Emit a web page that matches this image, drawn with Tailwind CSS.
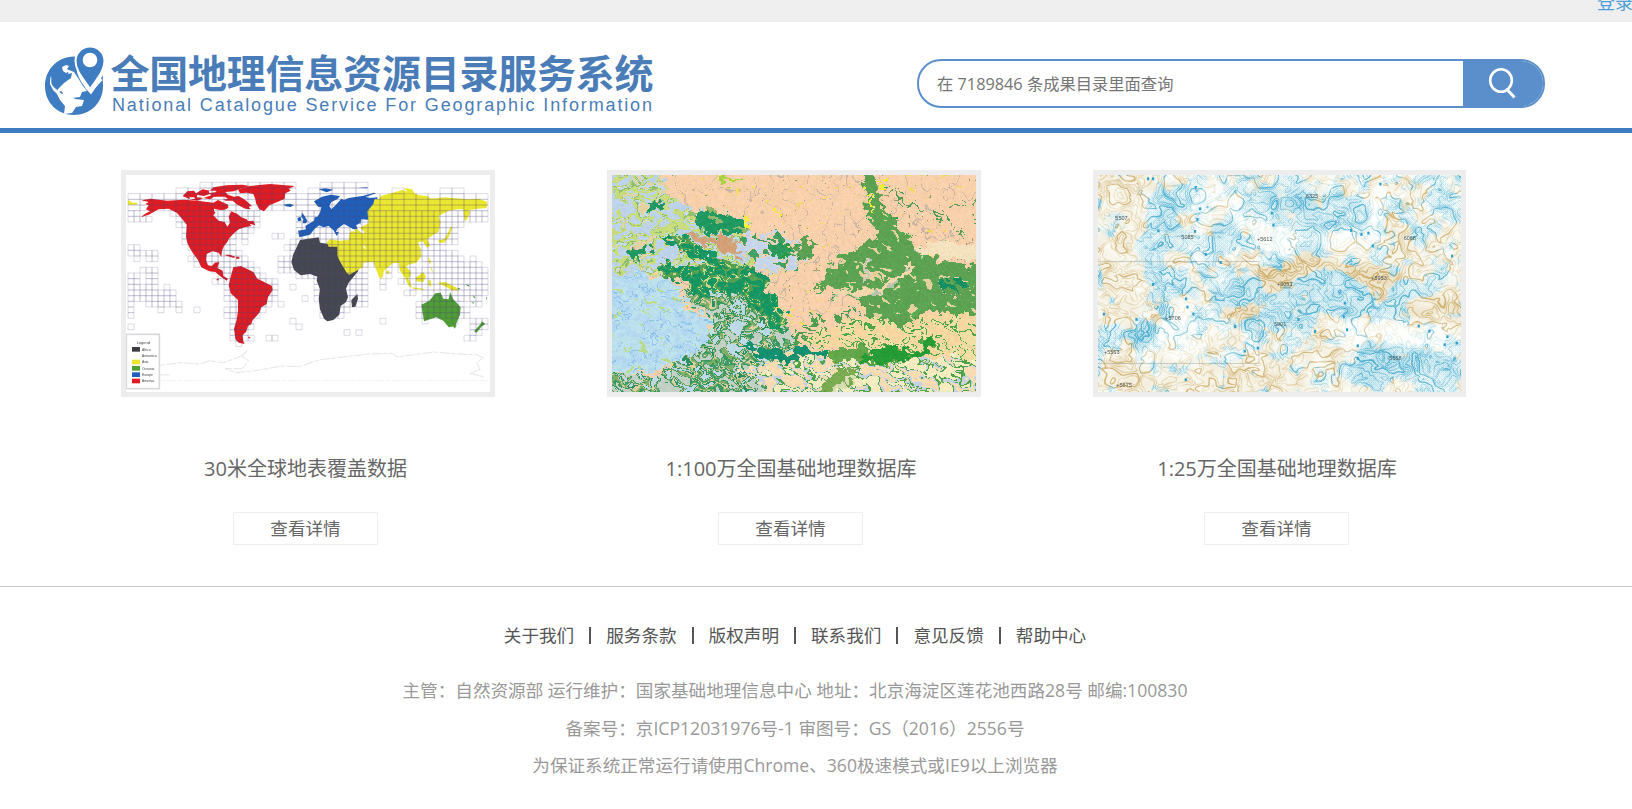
<!DOCTYPE html>
<html lang="zh-CN">
<head>
<meta charset="utf-8">
<title>全国地理信息资源目录服务系统</title>
<script src="https://cdn.jsdelivr.net/npm/@tailwindcss/browser@4"></script>
</head>
<body class="h-[809px] w-full overflow-hidden bg-white font-['Open_Sans','Noto_Sans_CJK_SC',sans-serif] font-normal text-[#666]">
<div class="flex h-[22px] items-end justify-end overflow-hidden bg-[#efefef]">
  <a class="-mr-[1px] mb-[8px] whitespace-nowrap text-[18px] leading-[24px] text-[#4c9ed9]">登录</a>
</div>
<header class="flex h-[111px] items-start border-b-[5px] border-[#3f7dc2]">
  <svg class="ml-[40px] mt-[18px] shrink-0" width="620" height="80" viewBox="40 40 620 80">
    <path fill="#3f7dc2" d="M74 56.500C57 57 45 70 45 86c0 17 13 29 29 29s29-12 29-29l-.3-11C100 81 96 87 91 94.500 84 86 76 77 76.500 66c0-3 .5-6 2-8.500z"/>
    <path fill="#fff" d="M51 76c1 4-1 7 2 10 2 3 4 3 5 5l4 3 3-2 5 3 5 4 9 1-2 6-6 1-4 6-8 1 1-8-5-6-3-6-4-4-3-6c0-3 0-6 1-8z"/>
    <path fill="#fff" d="M64 83l7-5 1-5-4 1 1-4 5 2 4 6 5 8 4 5-5 1-2 5-8 1-6-2-5-5-4 2 1-4z"/>
    <path fill="#fff" d="M62 67l4-2 3 1-2 3 3 2-4 2-3-2z"/>
    <path fill="#3f7dc2" stroke="#fff" stroke-width="2" d="M90 46.500c-8 0-14.500 6.500-14.500 14.500 0 10 8 18 14.500 28 7-10 14.500-18 14.500-28 0-8-6.500-14.500-14.500-14.500z"/>
    <circle cx="90" cy="60" r="7.300" fill="#fff"/>
    <path fill="none" stroke="#fff" stroke-width="3" d="M86 87l4.500 4 11-12"/>
    <text x="110.500" y="88.300" textLength="543" lengthAdjust="spacing" font-family="'Noto Sans CJK SC'" font-weight="700" font-size="39" fill="#4a7db8">全国地理信息资源目录服务系统</text>
    <text x="112" y="111" textLength="540" lengthAdjust="spacing" font-family="'Liberation Sans'" font-weight="400" font-size="18" fill="#4a7db8">National Catalogue Service For Geographic Information</text>
  </svg>
  <div class="ml-[257px] mt-[37px] flex h-[49px] w-[628px] shrink-0 overflow-hidden rounded-[24px] border-2 border-[#5b8fcc]">
    <div class="flex flex-1 items-center whitespace-nowrap pl-[18px] pt-[2px] text-[16.3px] text-[#757575]">在 7189846 条成果目录里面查询</div>
    <div class="w-[80px] bg-[#5b8fcc]">
      <svg class="ml-[25px] mt-[6px]" width="30" height="33" viewBox="1488 67 30 33" fill="none" stroke="#fff">
        <ellipse cx="1501" cy="80.500" rx="10.800" ry="11.300" stroke-width="2.600"/>
        <path d="M1507.500 90l7 7.500" stroke-width="3"/>
      </svg>
    </div>
  </div>
</header>

<main class="flex h-[454px] gap-[117px] border-b border-[#c8c8c8] pl-[121px] pt-[37px]">
  <section class="flex w-[369px] shrink-0 flex-col items-center">
    <div class="h-[227px] w-[374px] shrink-0 self-start overflow-hidden border-[5px] border-[#ededed]">
      <svg id="world" class="blur-[0.4px]" width="364" height="217" viewBox="48 45 1092 651" preserveAspectRatio="none">
        <g fill="#e01b22">
          <path d="M94 121l28-5 50 6 50-3 40 3 48 6 14-8 30 14 2 14-20 2-18 6-8 10 16 16 18 4 8 14 8-12-4-18 8-16 18 8 12 10 16 6 14 20-20 4-18 6-14 12-14 14-6 12-10 12-6 14-2 18-8-12-18-4-18 8-2 18 6 16 12 2 8-10 14-2-6 18 16 8 2 16 14 8-4 6-20-14-14-12-18-2-24-12-10-22-16-22-10-16-6-14-4-18 2-36-14-18-16-18-24-12-30 2-30 16-24 8 16-12 12-6-12-6 8-12-10-4 10-6z"/>
          <path d="M218 108l14-14 20-2 6 8 20-12 22 4 10-10 40-6 46-2 24 4-30 8-18 8-26 2 8 8 18 6 14-2 20 12 20 18-10 2 6 8-16-2-24-12-14-12-22 0-14-10-20-2-12 8-20-4-18 8-22-4z"/>
          <path d="M384 88l36-10 60-6 74 6-18 8 6 6-16 8-2 16-22 10-24 10-16 18-14-6-10-18-2-12-6-16-20-4-20 2z"/>
          <path d="M370 322l22-4 18 8 20 10 12 20 16 8 28 14 2 12-14 22-4 20-16 10-6 16-12 14-8 8-4 12-10 6-6 18-10 10 2 18 4 8-18-4-10-12-4-30 8-26 4-28 0-32-22-20-6-24 6-26z"/>
          <path d="M342 284l18 0 16 6-4 4-20-6zM378 290h10v6h-10zM320 356h6v5h-6zM414 530l8 1-5 5zM378 538l16 5-12 1zM404 184l26-2 6 14-14-4-16 0z"/>
        </g>
        <path fill="#fff" d="M262 104l20 4 18-6 4 4-24 8-20-2zM318 110l26 0 10 6-20 4zM296 92l20 0 4 4-22 3zM238 112l14 0 4 4-16 2z"/>
        <path fill="#1f5fba" d="M568 232l-4-20 24-4-2-10 16-10 10-6 2-10 8-2 8-12 4-16-10-2-12-16 24-14 26-6 28 4-8 10-18 8-6 12 6 10 14-14 16-18 8 4 14-6 40-6 24 6 22-2 0 14-14 10 2 22-6 22-30-2-6 30-24 0-20-4-14 6-10 18-10-18-14-12-16 4-12-6-14 10-14 18zM576 158l8 10 8 14-4 8-10 0 2-12-6-8zM562 174l10-4 2 12-10 2zM520 134l18-3 14 4-10 6-14-2zM626 88l20-3 24 4-20 8zM750 118l8-10 34-10 6 2-34 12-8 10zM742 84l30-2v3z"/>
        <path fill="#45474e" d="M570 240l26-4 30-4 4 16 28 4 6-6 34 6 8 28 22 36 20 4-4 14-28 34-8 18 6 26-6 14-16 12-4 26-18 16-18 4-10-8-12-28-4-32 4-28-10-26 2-12-22-8-28 4-20-16-8-24 6-24 10-20zM742 402l2 14-8 24-10 2-2-22z"/>
        <path fill="#ebe72e" d="M776 190l-4-36 18-22 4-16 12 2 6-10 36-10 30-8 14 6-10-12 24 4 8 12 14 6 22 2 14 8 40-4 68 6 36-2 24 10-2 18-26 2-26 4-2 14-10 18-4-12-2-22-18 0-26 4-30 16 6 18-6 30-18 10-16 12 8 18-8 8-14-20-14 4 8 18 2 22-14 20-24 6-8 6 14 14 0 12-8 10-12-6-12-18-4-24-18 2-26 22-4 18-8 8-12-30-8-22-30 2 0 12-16 10-26 14-8-6-18-30-10-20 0-28-26 0-6-14 10-8 30 4 26-2 4-24zM54 120l14 8 14 0-2 6-26 0zM830 330l8 4-2 8-8-4zM880 342l18 18 8 24-10-6zM908 382l32 4 0 4-30-4zM916 354l24-18 8 14-8 16-20-2zM954 362l8-2 2 20-8-4zM954 290l10 16-6 6zM962 318l8 20-6-6zM984 242l20-6 12-22 6-16 4 8-10 26-14 16-14 0zM1062 170l8-8 12-8-10 22-8 8zM982 368l22-2 34 16 8 10-22-2-16-10z"/>
        <path fill="#4f9d35" d="M934 434l24-12 18-22 16-2 8 18 16 2 4-22 10 22 22 24-2 22-14 34-20 4-16-20-22-10-36 12zM1028 496h12l-6 10zM1116 484l10 8-12 8-14 18-8-4 20-22zM1066 372l12 4-2 4zM1088 404l8 8-4 3zM1084 426l10 2-4 3zM1128 412l3 0-2 10zM1042 384l8 0-3 5z"/>
        <path fill="#fff" d="M738 196l12-6 4 18 10 8-4 6-14-10zM702 192l22 12 16 12-30-6-6 6-26 0 4-10zM756 252l12 12-4 4zM312 146l28 6 20-12-10 22 0 10-26-8-12-10z"/>
        <path id="grid" fill="none" stroke="#504d80" stroke-opacity=".27" stroke-width="2.200"/>
        <g fill="none" stroke="#d6d6d6" stroke-width="2" stroke-dasharray="14 5 30 3"><path d="M150 616l60-8 60 4 30-10 40 6 50-18 22-18-16 18 20 12-20 24-50 0 30 12 60-6 80-14 50 2 60-20 80-10 70-8 70-2 14 10 40-4 70-10 70 6 60 2 20 10-20 14 10 20-30 12 40 10M130 644l50 1"/><path stroke="#ededed" d="M150 662h984"/></g>
        <rect x="49" y="523" width="99" height="163" fill="#fff" stroke="#d9d9d9" stroke-width="5"/>
        <g font-family="'Liberation Sans'" font-size="10" fill="#444"><text x="80" y="551" font-size="12">Legend</text><text x="96" y="572">Africa</text><text x="96" y="591">Antarctica</text><text x="96" y="610">Asia</text><text x="96" y="629">Oceania</text><text x="96" y="648">Europe</text><text x="96" y="667">America</text></g>
        <path fill="#3b3d42" d="M66 561h24v14H66z"/><path fill="#ebe72e" d="M66 599h24v14H66z"/><path fill="#4f9d35" d="M66 618h24v14H66z"/><path fill="#1f5fba" d="M66 637h24v14H66z"/><path fill="#e01b22" d="M66 656h24v14H66z"/>
      </svg>
    </div>
    <h2 class="mt-[57px] h-[30px] whitespace-nowrap text-[20px] leading-[30px]">30米全球地表覆盖数据</h2>
    <a class="mt-[28px] flex h-[33px] w-[145px] items-center justify-center border border-[#eee] text-[17.6px] leading-none">查看详情</a>
  </section>
  <section class="flex w-[369px] shrink-0 flex-col items-center">
    <div class="h-[227px] w-[374px] shrink-0 self-start overflow-hidden border-[5px] border-[#ededed]"><canvas id="terrain" class="block blur-[0.5px]" width="364" height="217"></canvas></div>
    <h2 class="mt-[57px] mr-[1px] h-[30px] whitespace-nowrap text-[20px] leading-[30px]">1:100万全国基础地理数据库</h2>
    <a class="mt-[28px] mr-[2px] flex h-[33px] w-[145px] items-center justify-center border border-[#eee] text-[17.6px] leading-none">查看详情</a>
  </section>
  <section class="flex w-[369px] shrink-0 flex-col items-center">
    <div class="h-[227px] w-[373px] shrink-0 self-start overflow-hidden border-[5px] border-[#ededed]"><canvas id="contour" class="block blur-[0.4px]" width="363" height="217"></canvas></div>
    <h2 class="mt-[57px] mr-[1px] h-[30px] whitespace-nowrap text-[20px] leading-[30px]">1:25万全国基础地理数据库</h2>
    <a class="mt-[28px] mr-[2px] flex h-[33px] w-[145px] items-center justify-center border border-[#eee] text-[17.6px] leading-none">查看详情</a>
  </section>
</main>

<footer class="flex w-[1590px] flex-col items-center pt-[35px] text-[17.6px] text-[#999]">
  <nav class="flex h-[26px] items-center gap-[15px] whitespace-nowrap leading-[26px] text-[#555]">
    <a>关于我们</a><i class="h-[17px] w-[2px] bg-[#555]"></i><a>服务条款</a><i class="h-[17px] w-[2px] bg-[#555]"></i><a>版权声明</a><i class="h-[17px] w-[2px] bg-[#555]"></i><a>联系我们</a><i class="h-[17px] w-[2px] bg-[#555]"></i><a>意见反馈</a><i class="h-[17px] w-[2px] bg-[#555]"></i><a>帮助中心</a>
  </nav>
  <div class="mt-[24px] flex flex-col items-center whitespace-nowrap leading-[37.5px]">
    <p>主管：自然资源部 运行维护：国家基础地理信息中心 地址：北京海淀区莲花池西路28号 邮编:100830</p>
    <p>备案号：京ICP12031976号-1 审图号：GS（2016）2556号</p>
    <p>为保证系统正常运行请使用Chrome、360极速模式或IE9以上浏览器</p>
  </div>
</footer>

<script>
// Survey sheet grid: column ranges per row, 60 columns of 18 units
const rows = ['12-27 32-39','8-27 30-39 44-45 52-55','0-59','0-59','0-59','0-1 7-21 28-59','0-3 8-21 28-59','8-21 28-55','9-20 28-54','9-19 24-25 28-54','9-17 19-19 27-54','0-1 10-17 26-52','0-4 11-18 27-54','1-1 3-4 10-19 25-55 57-57','11-11 13-20 25-47 49-58','2-4 14-21 25-39 43-43 45-59','0-1 3-4 15-22 28-39 43-43 46-59','0-1 3-4 14-24 31-39 42-42 45-59','0-4 6-6 16-24 27-27 31-39 42-42 47-59','0-7 16-24 31-39 46-47 49-59','0-7 16-24 29-29 31-39 49-58','0-0 3-8 17-23 25-25 32-39 48-55 57-58','0-0 5-5 8-8 11-11 16-22 32-36 48-56','0-0 16-21 32-35 48-56','17-20 27-27 42-42 49-49 54-54 57-59','0-0 17-20 28-28 57-59','17-19 36-36 38-38 57-58','17-20 23-24 56-57','18-18'];
let d = '';
rows.forEach((r, i) => r.split(' ').forEach(s => {
  const [a, b] = s.split('-').map(Number), step = i < 5 ? 2 : 1;
  for (let c = a; c <= b; c += step) d += `M${54 + c * 18} ${67 + i * 17}h${18 * step}v17h${-18 * step}z`;
}));
document.getElementById('grid').setAttribute('d', d);

// Smooth value noise
function hash(x, y, s) { let n = Math.imul(x, 374761393) ^ Math.imul(y, 668265263) ^ Math.imul(s, 1274126177); n = Math.imul(n ^ (n >>> 13), 1274126177); return ((n ^ (n >>> 16)) >>> 0) / 4294967295; }
function noise(x, y, s) {
  const i = Math.floor(x), j = Math.floor(y); let u = x - i, v = y - j; u = u * u * (3 - 2 * u); v = v * v * (3 - 2 * v);
  return (hash(i, j, s) * (1 - u) + hash(i + 1, j, s) * u) * (1 - v) + (hash(i, j + 1, s) * (1 - u) + hash(i + 1, j + 1, s) * u) * v;
}
const fbm = (x, y, s) => noise(x, y, s) * .55 + noise(x * 2.1, y * 2.1, s + 1) * .3 + noise(x * 4.3, y * 4.3, s + 2) * .15;
const rgb = h => [parseInt(h.slice(0, 2), 16), parseInt(h.slice(2, 4), 16), parseInt(h.slice(4), 16)];
function fillPoly(g, c, p) { g.fillStyle = c; g.beginPath(); p.split(' ').forEach(q => { const [x, y] = q.split(',').map(Number); g.lineTo((x - 48) / 3, (y - 45) / 3); }); g.fill(); }

// Vegetation map: zones index into palettes of [threshold, colour] over noise
(() => {
  const W = 364, H = 217, cv = document.getElementById('terrain'), g = cv.getContext('2d');
  const z = document.createElement('canvas'); z.width = W; z.height = H; const zg = z.getContext('2d', { willReadFrequently: true });
  const zones = [
    ['0,0 0,0', [['f8d0ac', 1]]],
    ['48,45 195,45 230,110 310,160 450,200 520,240 600,300 560,340 400,310 200,330 48,350', [['bdd3ea', .42], ['c9dc7c', .58], ['8fbf6c', .63], ['c4dbe9', .7], ['e6d2a0', 1]]],
    ['48,340 200,345 265,420 345,500 350,560 240,610 48,650', [['b4d8f0', .48], ['bce0ec', .76], ['bcdc8c', 1]]],
    ['270,225 400,218 460,260 440,300 370,265 280,245', [['d3a077', .6], ['c4b184', .7], ['bdd0ea', 1]]],
    ['430,205 600,230 640,280 600,330 500,330 430,270', [['c5d5ec', .52], ['f8d0ac', .6], ['43a065', 1]]],
    ['175,230 270,230 350,280 420,310 510,350 520,400 590,490 560,505 440,430 300,400 245,370 190,345 190,300 280,305 370,320 280,285', [['159663', .48], ['55a052', .62], ['c9d989', .68], ['159663', 1]]],
    ['300,165 350,148 440,175 470,200 430,215 320,215', [['1f9862', .6], ['92b66a', 1]]],
    ['95,270 135,262 165,250 160,285 125,290 120,310 100,290', [['1f9862', .7], ['c9dc7c', 1]]],
    ['175,125 210,125 210,160 175,155', [['1f9862', 1]]],
    ['260,395 420,400 500,480 600,520 620,600 520,696 48,696 48,650 200,640 330,560 340,480', [['c2d0c6', .38], ['3a9a66', .46], ['7fae68', .54], ['d9cfa0', .6], ['2a9060', .67], ['bdd9e6', 1]]],
    ['440,560 640,575 720,580 700,600 620,610 480,600', [['13906f', .65], ['f4d6a8', 1]]],
    ['590,520 650,470 770,450 790,500 720,530 600,560', [['f8d0ac', .44], ['4f9f53', .6], ['f8d0ac', 1]]],
    ['780,470 960,480 1160,440 1160,600 980,600 780,560 600,560', [['f8d6a0', .5], ['f2dfa6', .58], ['4fa349', .66], ['f2dfa6', 1]]],
    ['430,620 640,600 1160,590 1160,710 540,710', [['f6dcb0', .4], ['c6d2e2', .5], ['4fa349', .58], ['f4ecc0', 1]]],
    ['640,710 700,640 780,630 770,670 700,710', [['7aab50', .62], ['d4dcb0', 1]]],
    ['700,575 800,565 860,590 800,610 700,600', [['62a84b', 1]]],
    ['780,600 860,560 960,580 1010,520 1020,550 980,590 860,610', [['259c35', 1]]],
    ['660,385 745,290 800,265 850,225 815,170 805,40 830,40 850,120 900,180 945,240 960,280 1060,310 1170,325 1170,475 1000,450 960,495 880,485 810,470 780,420 700,410 800,370 740,380', [['5ca252', .66], ['57ab51', .73], ['e6cf9f', 1]]],
    ['700,405 830,385 900,345 940,305 955,310 910,365 850,400 740,420', [['f2d6ac', .66], ['b6c6ae', 1]]],
    ['800,300 812,300 810,370 800,370', [['cfc8b8', 1]]],
    ['1020,350 1100,350 1120,400 1050,410', [['5ca252', .5], ['168f62', 1]]],
    ['600,245 650,250 640,290 605,280', [['5ca252', 1]]],
    ['530,250 580,250 580,275 530,275', [['2d9a5e', 1]]],
    ['860,60 930,110 970,150 1060,170 1050,190 960,170 880,110', [['f8d0ac', .45], ['4f9a55', .57], ['f8d0ac', 1]]],
    ['1030,240 1170,250 1170,300 960,285', [['f3e2bd', 1]]],
    ['370,45 425,62 415,70 365,48', [['a5d343', 1]]],
    ['848,55 862,60 860,90 848,90', [['f5ec35', 1]]],
    ['808,95 822,100 838,145 825,145', [['f0ee38', 1]]],
    ['445,180 475,182 470,200 450,200', [['f5ec35', 1]]],
    ['555,160 570,160 565,175 556,172', [['f5ec35', 1]]],
    ['1060,130 1170,110 1170,220 1080,230', [['f8d0ac', .58], ['5c9f58', .64], ['f8d0ac', 1]]]
  ];
  zones.forEach((q, i) => i && fillPoly(zg, `rgb(${i * 8},0,0)`, q[0]));
  const zd = zg.getImageData(0, 0, W, H).data, im = g.createImageData(W, H);
  const pal = zones.map(q => q[1].map(e => [rgb(e[0]), e[1]]));
  for (let y = 0; y < H; y++) for (let x = 0; x < W; x++) {
    const k = x < 220 ? 18 : 13;
    const X = Math.max(0, Math.min(W - 1, Math.round(x + (fbm(x / 9, y / 9, 3) - .5) * k + (noise(x / 4, y / 4, 7) - .5) * 7)));
    const Y = Math.max(0, Math.min(H - 1, Math.round(y + (fbm(x / 9, y / 9, 13) - .5) * k + (noise(x / 4, y / 4, 17) - .5) * 7)));
    const zi = Math.min(zones.length - 1, Math.round(zd[(Y * W + X) * 4] / 8));
    const wx = x + (noise(x / 7, y / 7, 31) - .5) * 9, wy = y + (noise(x / 7, y / 7, 33) - .5) * 9;
    const up = zi === 1 ? -.25 : .43;
    const rx = wx * .9 + wy * up, ry = wy * .9 - wx * up;
    const n = noise(rx / 9, ry / 4, 29 + (zi % 4)) * .68 + noise(rx / 4, ry / 2.5, 41) * .32;
    let c = pal[zi].find(e => n <= e[1])[0].slice();
    if (zi === 0) {
      if (fbm(x / 5, y / 4, 90) > .79) c = rgb('f3dc55');
      else if (Math.abs(fbm(x / 30, y / 30, 70) - .5) < .006 || Math.abs(fbm(x / 26, y / 40, 75) - .47) < .006) c = rgb('cdb8a7');
      else if (noise(x / 3, y / 2.5, 55) > .955) c = rgb('8fa06c');
    }
    if (zi === 2 && Math.abs(fbm(x / 13, y / 10, 44) - .5) < .018) c = rgb('8fc4ea');
    const sh = (noise(x / 1.5, y / 1.5, 99) - .5) * 12, o = (y * W + x) * 4;
    im.data[o] = c[0] + sh; im.data[o + 1] = c[1] + sh; im.data[o + 2] = c[2] + sh; im.data[o + 3] = 255;
  }
  g.putImageData(im, 0, 0);
})();

// Contour map: isolines of a height field, tinted glacier blue or ground tan
(() => {
  const W = 363, H = 217, g = document.getElementById('contour').getContext('2d');
  const z = document.createElement('canvas'); z.width = W; z.height = H; const zg = z.getContext('2d', { willReadFrequently: true });
  zg.fillStyle = 'rgb(128,75,0)'; zg.fillRect(0, 0, W, H); zg.filter = 'blur(4px)';
  // red channel: blue/tan balance, green channel: intensity
  fillPoly(zg, 'rgb(30,100,0)', '48,45 210,45 200,200 150,310 220,430 150,500 48,500');
  fillPoly(zg, 'rgb(220,110,0)', '210,90 320,100 260,300 360,400 200,420 160,280');
  fillPoly(zg, 'rgb(220,120,0)', '370,190 560,100 860,120 900,200 680,290 540,250 400,290');
  fillPoly(zg, 'rgb(230,140,0)', '350,330 650,320 900,310 1000,360 960,450 740,470 600,500 540,540 380,430');
  fillPoly(zg, 'rgb(250,250,0)', '130,520 200,500 240,420 270,460 220,540 300,570 260,600 140,560');
  fillPoly(zg, 'rgb(240,170,0)', '850,520 940,560 1140,600 1140,660 980,630 870,690 800,680');
  fillPoly(zg, 'rgb(250,210,0)', '520,105 680,100 730,130 650,160 560,130');
  fillPoly(zg, 'rgb(20,110,0)', '48,610 160,600 300,640 500,590 660,630 700,696 48,696');
  fillPoly(zg, 'rgb(0,250,0)', '520,330 660,290 680,230 700,300 900,320 970,350 890,430 850,360 700,320 560,400');
  fillPoly(zg, 'rgb(0,240,0)', '400,450 560,430 510,490');
  fillPoly(zg, 'rgb(10,180,0)', '200,490 320,480 280,600 390,530 440,580 260,610');
  fillPoly(zg, 'rgb(10,180,0)', '690,510 740,490 780,590 710,570');
  fillPoly(zg, 'rgb(10,180,0)', '880,180 950,180 940,240 890,240');
  fillPoly(zg, 'rgb(10,180,0)', '950,430 1000,430 1140,400 1140,490 960,480');
  fillPoly(zg, 'rgb(128,0,0)', '320,45 420,80 600,200 680,230 620,300 560,280 380,130 370,300 430,310 440,400 360,310 310,270 330,180');
  fillPoly(zg, 'rgb(128,0,0)', '890,45 940,50 900,180 900,280 690,270 700,220 840,200');
  fillPoly(zg, 'rgb(128,0,0)', '730,480 1000,480 1140,530 1140,590 1000,560 860,530 800,600 740,560');
  fillPoly(zg, 'rgb(128,0,0)', '290,420 340,440 380,570 300,620 480,560 480,600 150,610 180,580');
  const zd = zg.getImageData(0, 0, W, H).data, im = g.createImageData(W, H);
  const hf = (x, y) => fbm(x / 27 + noise(x / 9, y / 9, 5) * .35, y / 23 + noise(x / 9, y / 9, 9) * .35, 21) * 13;
  const mix = (a, b, t) => a + (b - a) * t, blue = rgb('3aa6cc'), tan = rgb('c9a458');
  for (let y = 0; y < H; y++) for (let x = 0; x < W; x++) {
    const o = (y * W + x) * 4, h = hf(x, y), gr = Math.hypot(hf(x + 1, y) - h, hf(x, y + 1) - h) + .02;
    let t = zd[o] / 255 + (fbm(x / 14, y / 14, 61) - .5) * 1.5; t = Math.max(0, Math.min(1, (t - .35) * 4));
    const q = Math.max(0, Math.min(1, zd[o + 1] / 255 + (fbm(x / 10, y / 10, 81) - .5) * .8));
    const f = Math.abs(h - Math.round(h)) / gr, h3 = Math.abs(h / 4 - Math.round(h / 4)) * 4 / gr;
    let a = q * .34 + Math.max(0, 1 - f) * (.16 + q * .4) + Math.max(0, 1.2 - h3) * .34;
    if (t > .6 && q > .12 && ((x + y) % 4 === 0 || (x - y + 400) % 4 === 0)) a += .15;
    a = Math.min(.85, a);
    const bg = [253, 255, 252];
    for (let k = 0; k < 3; k++) im.data[o + k] = mix(bg[k], mix(tan[k], blue[k], t), a);
    im.data[o + 3] = 255;
  }
  g.putImageData(im, 0, 0);
  g.strokeStyle = 'rgba(110,120,110,.3)'; g.strokeRect(-2, 86.5, 163, 102);
  g.fillStyle = '#2a9fd0';
  '198,56 213,56 354,146 346,178 339,214 229,212 371,283 416,307 341,82 569,159 574,195 895,72 807,211 838,223 859,219 872,258 1110,288 213,373 312,416 316,441 334,462 163,478 66,462 459,499 488,573 527,564 649,478 699,514 788,429 785,470 795,509 827,557 827,595 1010,498 1042,513 1096,530 1088,554 1124,549 311,659'.split(' ').forEach(p => { const [x, y] = p.split(',').map(Number); g.fillRect((x - 48) / 3 - 1, (y - 45) / 3 - 1.3, 2.2, 2.8); });
  g.fillStyle = '#4b5553'; g.font = '5.5px "Liberation Sans"';
  [[672, 115, '6325'], [100, 179, '5507'], [298, 236, '5085'], [525, 244, '+5612'], [965, 241, '6068'], [868, 359, '+5953'], [585, 377, '+6051'], [250, 480, '+5706'], [576, 497, '5901'], [66, 581, '+5563'], [922, 601, '5558'], [103, 682, '+5675']].forEach(l => g.fillText(l[2], (l[0] - 48) / 3, (l[1] - 45) / 3));
})();
</script>
</body>
</html>
